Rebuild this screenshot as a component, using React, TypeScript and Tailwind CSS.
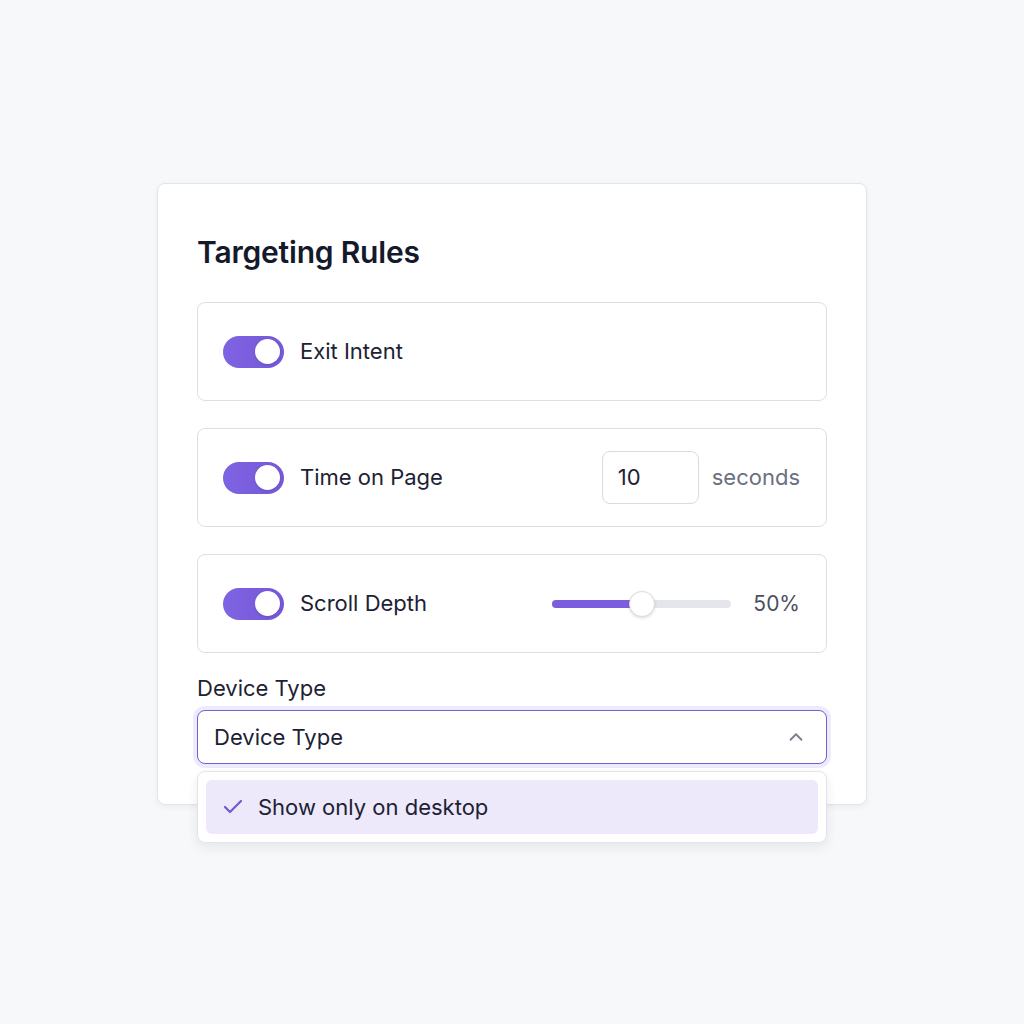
import { Check, ChevronUp } from "lucide-react";

function Toggle() {
  return (
    <div className="flex h-[32px] w-[61px] shrink-0 items-center justify-end rounded-full bg-gradient-to-r from-[#7e63e2] to-[#7658d8] pr-[4px]">
      <div className="h-[25px] w-[25px] rounded-full bg-white shadow-sm" />
    </div>
  );
}

export default function App() {
  return (
    <div
      className="flex min-h-screen justify-center bg-[#f7f8fa] pt-[183px]"
      style={{ fontFamily: "Inter, 'Noto Sans', sans-serif" }}
    >
      <div className="h-[622px] w-[710px] rounded-lg border border-[#e3e5ea] bg-white px-[39px] pt-[48px] shadow-[0_2px_6px_rgba(15,23,42,0.05)]">
        {/* Header */}
        <h1 className="text-[30px] font-semibold leading-[40px] tracking-[-0.2px] text-[#141a2b]">
          Targeting Rules
        </h1>

        {/* Rules */}
        <div className="mt-[30px] flex flex-col gap-[27px]">
          <div className="flex h-[99px] items-center rounded-lg border border-[#dedfe4] px-[25px]">
            <Toggle />
            <span className="ml-4 text-[22px] text-[#1c2233]">Exit Intent</span>
          </div>

          <div className="flex h-[99px] items-center rounded-lg border border-[#dedfe4] pl-[25px] pr-[26px]">
            <Toggle />
            <span className="ml-4 text-[22px] text-[#1c2233]">Time on Page</span>
            <div className="ml-auto flex h-[53px] w-[97px] items-center rounded-lg border border-[#d9dbe1] px-[15px] text-[22px] text-[#1c2233]">
              10
            </div>
            <span className="ml-[13px] text-[22px] text-[#6b7080]">seconds</span>
          </div>

          <div className="flex h-[99px] items-center rounded-lg border border-[#dedfe4] pl-[25px] pr-[26px]">
            <Toggle />
            <span className="ml-4 text-[22px] text-[#1c2233]">Scroll Depth</span>
            <div className="relative ml-auto flex h-[26px] w-[179px] items-center">
              <div className="h-[8px] w-full rounded-full bg-[#e4e6ec]" />
              <div className="absolute left-0 top-[9px] h-[8px] w-[90px] rounded-full bg-[#7b5ede]" />
              <div className="absolute left-[77px] top-0 h-[26px] w-[26px] rounded-full border border-[#dcdde3] bg-white shadow-[0_1px_3px_rgba(0,0,0,0.15)]" />
            </div>
            <span className="ml-[22px] text-[21px] text-[#4b5060]">50%</span>
          </div>
        </div>

        {/* Device Type */}
        <div className="mt-[20px] text-[22px] leading-[30px] text-[#1c2233]">Device Type</div>
        <div className="relative mt-[7px]">
          <div className="flex h-[54px] items-center justify-between rounded-lg border-[1.5px] border-[#7461c9] bg-white pl-4 pr-[19px] shadow-[0_0_0_4px_#eee9fc]">
            <span className="text-[22px] text-[#1c2233]">Device Type</span>
            <ChevronUp size={22} strokeWidth={2} className="text-[#7a7f8c]" />
          </div>
          <div className="absolute left-0 right-0 top-[61px] rounded-lg border border-[#e3e4e9] bg-white p-[8px] shadow-[0_4px_12px_rgba(15,23,42,0.08)]">
            <div className="flex h-[54px] items-center rounded-md bg-[#ede9fb] pl-[15px]">
              <Check size={24} strokeWidth={2.2} className="text-[#7258d4]" />
              <span className="ml-[13px] text-[22px] text-[#1c2233]">Show only on desktop</span>
            </div>
          </div>
        </div>
      </div>
    </div>
  );
}
